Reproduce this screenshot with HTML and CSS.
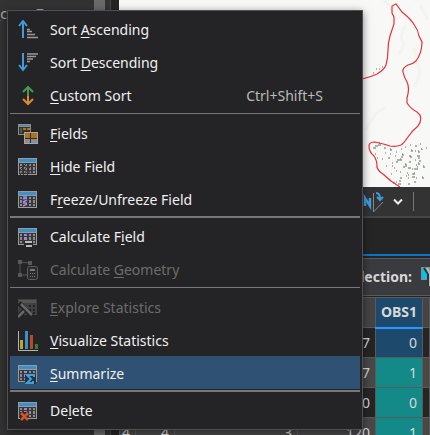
FILE: index.html
```html
<!DOCTYPE html>
<html lang="en">
<head>
<meta charset="utf-8">
<title>Attribute table</title>
<link rel="stylesheet" href="styles.css">
</head>
<body>
<div class="app">
  <aside class="sidebar">
    <div class="layers">_cover7</div>
    <div class="scrollbar"><div class="thumb"></div></div>
    <div class="gutter"></div>
  </aside>
  <main class="workspace">
    <svg class="map" viewBox="119 0 311 187" preserveAspectRatio="xMaxYMin slice" aria-label="Map">
      <rect x="119" width="311" height="187" fill="#f8f8f6"/>
      <path d="M405 25l-4 12 3 8-5 10M384 0l6 7M414 48l6 25-5 14M365 130l12-18 8-4M420 5l8 15" fill="none" stroke="#f3f3f0" stroke-width="3"/>
      <path d="M373 73h1m2-4h1m2 0h1m2-2h1M373 148h3m-1-2h3m0-1h3m-2-2h1m4 5h2m4 1h1m-16 5h1m1 4h1m4 1h1M385 153h1m4 1h1m-1-4h2m4 2h1m4-3h1m3-2h1m4-2h1m4 1h2m3-2h1M388 158h2m5-2h1m1 4h3m-4 2h2m-6 1h1m8-6h2m6-1h1m5-5h1m1 5h3m-2 2h2m-5 2h1m3 1h2M386 166h1m5 0h1m1 2h1m8-1h2m4-5h2m-3 6h3m6-1h1m-4 2h4m-2-4h1M396 171h1m3 1h1m-10 2h1m8 4h2m-6 4h1m-4 1h2m3 1h3m-2-3h2m7-6h1m3-1h3m-3 3h3m-7 1h1m7 0h1m-3 4h2m-8 2h2m-3-11h1m-2 3h1m7-3h1m-3-4h1M400 159h1v2m4 3h1v3m5-17h1v2m6 11h1v2m-17-11h1v2m15-5h1v2m-9 3h1v2m12 8h1v2m-2 9h1v2m-2-30h1v1m4-2h1" fill="none" stroke="#5b7458" stroke-width="1"/>
      <path d="M362 79Q371 77 377 74Q384 70 386 65Q388 58 388 50Q388 43 390 36L394 24V17L392 13V6L394 5L396 4L402 12Q411 19 415 26Q418 30 419 36L422 42Q422 53 416 61Q413 64 408 65Q402 68 403 72Q404 77 407 82Q410 88 407 98V103Q411 109 417 112L420 115Q422 121 418 126Q412 131 408 137Q404 143 401 145Q396 147 390 146Q384 144 375 142Q369 142 369 146Q369 152 374 156Q377 160 377 167Q378 171 383 174Q391 182 400 187" fill="none" stroke="#e8303a" stroke-width="1.2"/>
    </svg>
    <div class="toolbar">
      <button class="tool" aria-label="North orientation">
        <svg width="22" height="22" viewBox="0 0 22 22"><path d="M2 15V7l5 8V7" fill="none" stroke="#3f9bdc" stroke-width="2.500"/><path d="M10.500 2v19L20 11" fill="none" stroke="#888" stroke-width="1"/><path d="M13 2q4 0 4 6M14 6l3 3 3-3" fill="none" stroke="#3f9bdc" stroke-width="2"/></svg>
      </button>
      <button class="tool" aria-label="More options">
        <svg width="10" height="8" viewBox="0 0 10 8"><path d="M1 1.500l4 4 4-4" fill="none" stroke="#eee" stroke-width="2"/></svg>
      </button>
      <span class="divider"></span>
    </div>
    <div class="strip"></div>
    <div class="selection">
      <span>Selection:</span>
      <button class="tool" aria-label="Select by attributes">
        <svg width="9" height="22" viewBox="0 0 9 22"><path d="M0 1h9v13H0z" fill="#8b8b8b"/><path d="M1 2h3l3 4v7H1z" fill="#08c2ee"/><path d="M3 2l4 6v12" fill="none" stroke="#333" stroke-width="2"/><path d="M6 2l3 6v12" fill="none" stroke="#bbb" stroke-width="2"/></svg>
      </button>
    </div>
    <table class="grid">
      <colgroup><col class="c-id"><col class="c-code"><col><col class="c-val"><col class="c-obs"><col class="c-end"></colgroup>
      <thead><tr><th></th><th></th><th></th><th></th><th class="picked">OBS1</th><th></th></tr></thead>
      <tbody>
        <tr><td></td><td></td><td></td><td>47</td><td class="picked">0</td><td></td></tr>
        <tr><td></td><td></td><td></td><td>47</td><td class="match">1</td><td></td></tr>
        <tr><td></td><td></td><td></td><td>80</td><td class="match">0</td><td></td></tr>
        <tr><td>4</td><td>4</td><td>3</td><td>120</td><td class="match">1</td><td></td></tr>
      </tbody>
    </table>
  </main>
</div>

<svg width="0" height="0" class="defs">
  <symbol id="table" viewBox="0 0 20 20">
    <path d="M0 1h19v17H0z" fill="#9a9a9a"/><path d="M1 2h17v3H1z" fill="#3a92cc"/>
    <path d="M1 6h17v11H1z" fill="#39393b"/>
    <path d="M2 7h2v2H2zm4 0h3v2H6zm5 0h2v2h-2zm4 0h2v2h-2zM2 10h2v3H2zm4 0h3v3H6zm5 0h2v3h-2zm4 0h2v3h-2zM2 14h2v2H2zm4 0h3v2H6zm5 0h2v2h-2zm4 0h2v2h-2z" fill="#8c8c8c"/>
  </symbol>
</svg>

<nav class="menu" role="menu">
  <button class="item" role="menuitem">
    <svg class="icon" viewBox="0 0 20 20"><path d="M5 18V2M1 6l4-5 4 5" fill="none" stroke="#3f9bdc" stroke-width="2"/><path d="M9 9.500h3M9 11.500h5M9 14.500h8M9 17.500h11" fill="none" stroke="#999" stroke-width="1.500"/></svg>
    <span>Sort <u>A</u>scending</span></button>
  <button class="item" role="menuitem">
    <svg class="icon" viewBox="0 0 20 20"><path d="M5 0v17M1 12l4 5 4-5" fill="none" stroke="#3f9bdc" stroke-width="2"/><path d="M9 1h11M9 3.500h9M9 6h6M9 8.500h3" fill="none" stroke="#999" stroke-width="1.500"/></svg>
    <span>Sort <u>D</u>escending</span></button>
  <button class="item" role="menuitem">
    <svg class="icon" viewBox="0 0 20 20"><path d="M10 10V2M5 6l5-5 5 5" fill="none" stroke="#4a9a4d" stroke-width="2"/><path d="M10 10v8M5 13l5 5 5-5" fill="none" stroke="#d98a35" stroke-width="2"/></svg>
    <span><u>C</u>ustom Sort</span><kbd>Ctrl+Shift+S</kbd></button>
  <hr>
  <button class="item" role="menuitem">
    <svg class="icon" viewBox="0 0 20 20"><path d="M0 0h13v11H0z" fill="#8c8c8c"/><path d="M1 1h11v1H1z" fill="#3a92cc"/><path d="M1 3h11v7H1z" fill="#333"/><path d="M2 4h2v5H2z" fill="#326b35"/><path d="M5 4h3v2H5zm4 0h3v2H9z" fill="#b3701f"/><path d="M6 8h14v12H6z" fill="#a5a5a5"/><path d="M7 9h12v10H7z" fill="#2c2c2d"/><path d="M7 9h5v5H7zm6 0h6v5h-6z" fill="#b3701f"/><path d="M7 15h5v4H7zm6 0h6v4h-6z" fill="#8d8d8d"/></svg>
    <span><u>F</u>ields</span></button>
  <button class="item" role="menuitem">
    <svg class="icon" viewBox="0 0 20 20"><use href="#table"/><path d="M2 18L12 6M5 18l8-9M1 14l8-8M9 18l4-5" stroke="#2b2b2c" stroke-width="1"/></svg>
    <span><u>H</u>ide Field</span></button>
  <button class="item" role="menuitem">
    <svg class="icon" viewBox="0 0 20 20"><use href="#table"/><path d="M5 6h5v11H5z" fill="#343244"/><path d="M5 7h4M5 9l4-1M5 12l4-2M5 13h4M5 16l4-2" stroke="#a18bd8" stroke-width="1.500"/></svg>
    <span>F<u>r</u>eeze/Unfreeze Field</span></button>
  <hr class="thick">
  <button class="item" role="menuitem">
    <svg class="icon" viewBox="0 0 20 20"><use href="#table"/><path d="M6 7h3v2H6zm0 3h3v3H6zm0 4h3v2H6z" fill="#9a84e0"/><path d="M6 14h9v4H6z" fill="#29292a"/><path d="M7 14h7v2H7zm1 4h6v2H8z" fill="#bbb"/></svg>
    <span>Calculate F<u>i</u>eld</span></button>
  <button class="item" role="menuitem" disabled>
    <svg class="icon" viewBox="0 0 20 20"><path d="M2 3v11M2 2l10 1M3 15h6" fill="none" stroke="#555" stroke-width="1"/><path d="M0 0h4v4H0zm10 1h4v4h-4zM0 13h4v4H0z" fill="#585858"/><rect x="9.500" y="6.500" width="10" height="13" rx="2" fill="#2b2b2b" stroke="#5d5d5d"/><path d="M12 9h5v2h-5zm0 4h1v1h-1zm2 0h1v1h-1zm2 0h1v1h-1zm-4 3h1v1h-1zm2 0h1v1h-1zm2 0h1v1h-1z" fill="#777"/></svg>
    <span>Calculate <u>G</u>eometry</span></button>
  <hr>
  <button class="item" role="menuitem" disabled>
    <svg class="icon" viewBox="0 0 20 20"><path d="M0 1h19v16H0z" fill="#414141"/><path d="M1 2h17v3H1z" fill="#555"/><path d="M2 7h3v2H2zm9 0h2v2h-2zm4 0h2v2h-2zm-4 4h2v2h-2zm4 0h2v2h-2zm0 3h2v2h-2z" fill="#222"/><path d="M1 5l13 13M8 11l-8 8" stroke="#222" stroke-width="5"/><path d="M3 6l11 11M6 13l-6 6" stroke="#686868" stroke-width="2.500"/></svg>
    <span><u>E</u>xplore Statistics</span></button>
  <button class="item" role="menuitem">
    <svg class="icon" viewBox="0 0 20 20"><path d="M.500 0v19.500H20" fill="none" stroke="#b4b4b4"/><path d="M2 9h3v9H2z" fill="#bda52b"/><path d="M7 0h3v18H7z" fill="#398fca"/><path d="M12 4h3v14h-3z" fill="#b64a29"/><path d="M17 13h3v5h-3z" fill="#387b39"/></svg>
    <span><u>V</u>isualize Statistics</span></button>
  <button class="item active" role="menuitem">
    <svg class="icon" viewBox="0 0 20 20"><use href="#table"/><path d="M6 7h3v2H6zm0 3h3v3H6z" fill="#9a84e0"/><path d="M7 10h11v10H7z" fill="#29313b"/><path d="M16 13v-2H9l4 4-4 4h6v-2" fill="none" stroke="#3f9fe0" stroke-width="2"/></svg>
    <span><u>S</u>ummarize</span></button>
  <hr class="thick">
  <button class="item" role="menuitem">
    <svg class="icon" viewBox="0 0 20 20"><use href="#table"/><path d="M6 7h3v2H6zm0 3h3v3H6z" fill="#9a84e0"/><path d="M2 11h8v8H2z" fill="#29292a"/><path d="M3 12l7 7M10 12l-7 7" stroke="#d9512c" stroke-width="2.500"/></svg>
    <span>De<u>l</u>ete</span></button>
</nav>
</body>
</html>
```
FILE: styles.css
```css
* { box-sizing: border-box; }

body {
  margin: 0;
  overflow: hidden;
  background: #252526;
  color: #d8d8d8;
  font: 14px/20px "Noto Sans", "Open Sans", sans-serif;
}

button {
  margin: 0;
  padding: 0;
  border: 0;
  background: none;
  color: inherit;
  font: inherit;
}

svg { display: block; }
.defs { position: absolute; }

.app { display: flex; height: 100vh; overflow: hidden; }

.sidebar { display: flex; flex: none; width: 119px; background: #333; }
.layers { flex: 1; padding-top: 4px; color: #aaa; text-indent: -6px; }
.scrollbar { width: 16px; background: #333; }
.thumb { width: 11px; height: 100%; background: #6a6a6a; }
.gutter { width: 9px; border-left: 1px solid #484848; background: #252526; }

.workspace { display: flex; flex: 1; flex-direction: column; min-width: 0; }
.map { flex: none; width: 100%; height: 187px; }

.toolbar {
  display: flex;
  flex: none;
  align-items: center;
  justify-content: flex-end;
  gap: 8px;
  height: 31px;
  padding-right: 16px;
  border-bottom: 2px solid #454548;
  background: #333;
}
.divider { width: 1px; height: 19px; margin-left: 2px; background: #777; }

.strip { flex: none; height: 38px; border-bottom: 2px solid #0a74ca; background: #252526; }

.selection {
  display: flex;
  flex: none;
  align-items: center;
  justify-content: flex-end;
  gap: 9px;
  height: 38px;
  margin-top: 2px;
  border: solid #5c5c5c;
  border-width: 1px 0;
  background: #3a3b3e;
  font-weight: 700;
}

.grid {
  width: 100%;
  margin-top: 1px;
  border-collapse: collapse;
  table-layout: fixed;
}
.c-id { width: 16px; }
.c-code { width: 39px; }
.c-val { width: 78px; }
.c-obs { width: 47px; }
.c-end { width: 7px; }

.grid th, .grid td {
  height: 30px;
  padding: 0 5px 0 0;
  border: 1px solid #5a5a5a;
  text-align: right;
}
.grid th { padding: 0; background: #444; text-align: center; }
.grid tr:nth-child(even) td { background: #484848; }
.grid .picked { background: #1d4a6c; }
.grid th.picked { border-bottom: 2px solid #2997ff; }
.grid tr .match, .grid tr:nth-child(even) .match { background: #138a88; }

.menu {
  position: absolute;
  top: 10px;
  right: 67px;
  left: 7px;
  padding: 1px 2px 3px;
  border: 1px solid #505052;
  background: #242426;
  box-shadow: 0 2px 8px rgba(0, 0, 0, 0.5);
  color: #f0f0f0;
}

.item {
  display: flex;
  align-items: center;
  width: 100%;
  height: 33px;
  padding: 2px 37px 0 8px;
  text-align: left;
}
.item:disabled { color: #6c6c6c; }
.item.active { background: #2f5173; }
.item span { flex: 1; }
.item u { text-decoration-thickness: 1px; text-underline-offset: 2px; }
.item kbd { color: #bbb; font: inherit; }

.icon { flex: none; width: 20px; height: 20px; margin-right: 12px; }

.menu hr { height: 1px; margin: 2px 0; border: 0; background: #77777a; }
.menu hr.thick { height: 2px; margin: 1px 0; }
```
